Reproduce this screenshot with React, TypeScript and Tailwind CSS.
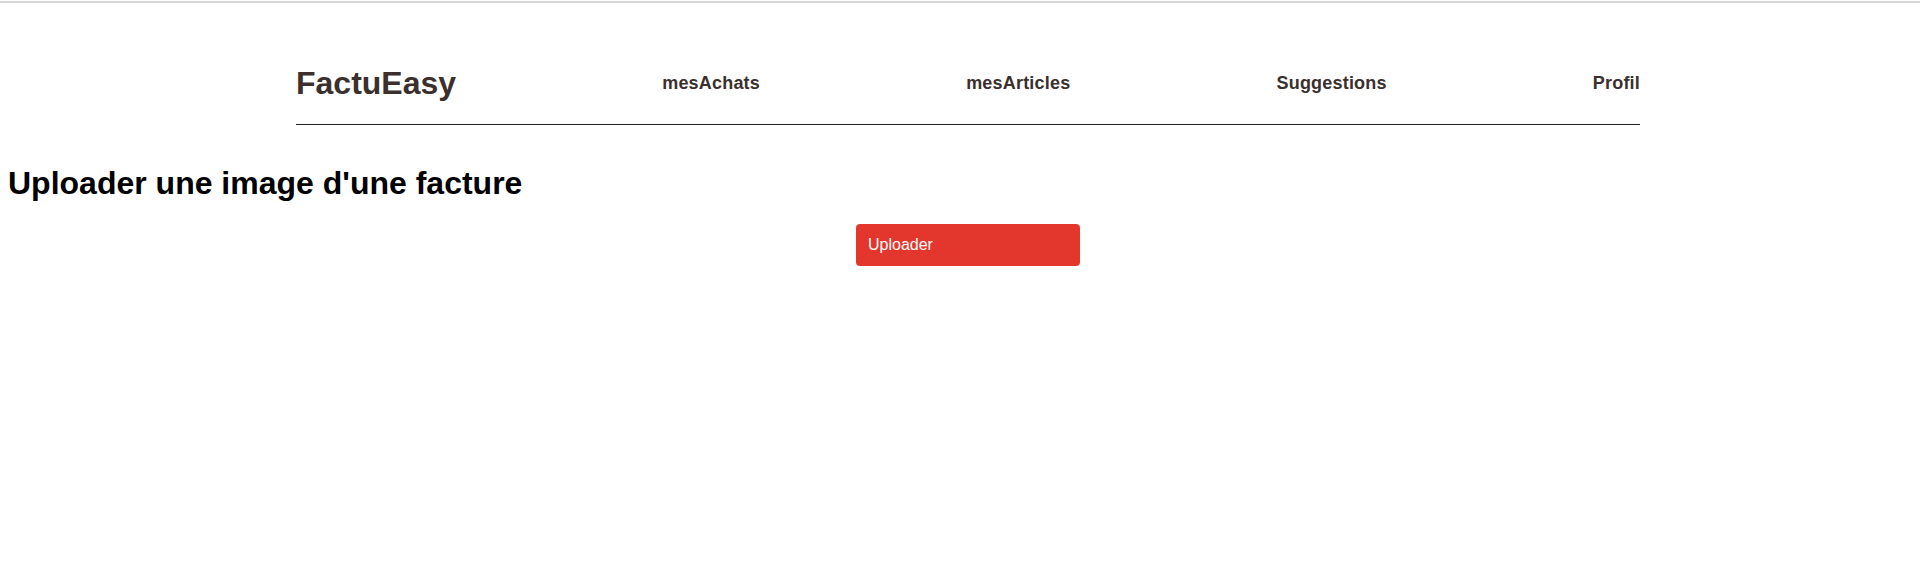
const links = ['mesAchats', 'mesArticles', 'Suggestions', 'Profil'];

export default function App() {
  return (
    <div className="min-h-[570px] bg-white font-['Liberation_Sans',Arial,sans-serif]">
      <div className="h-[2px] mt-[1px] bg-[#d6d6d6]" />
      <nav className="ml-[296px] w-[1344px] mt-[62px] pb-[22px] border-b border-[#222] flex items-center justify-between text-[#3b302e]">
        <span className="text-[32px] font-bold leading-[37px]">FactuEasy</span>
        {links.map((l) => (
          <a key={l} href="#" className="text-[18px] font-bold leading-[21px] tracking-[0.2px]">
            {l}
          </a>
        ))}
      </nav>
      <h1 className="mt-[40px] ml-[8px] text-[32px] font-bold leading-[37px] text-black">
        Uploader une image d'une facture
      </h1>
      <div className="mt-[22px] flex justify-center pl-[16px]">
        <button className="w-[224px] h-[42px] rounded-[4px] bg-[#e3362d] text-white text-[16px] text-left pl-[12px]">
          Uploader
        </button>
      </div>
    </div>
  );
}
